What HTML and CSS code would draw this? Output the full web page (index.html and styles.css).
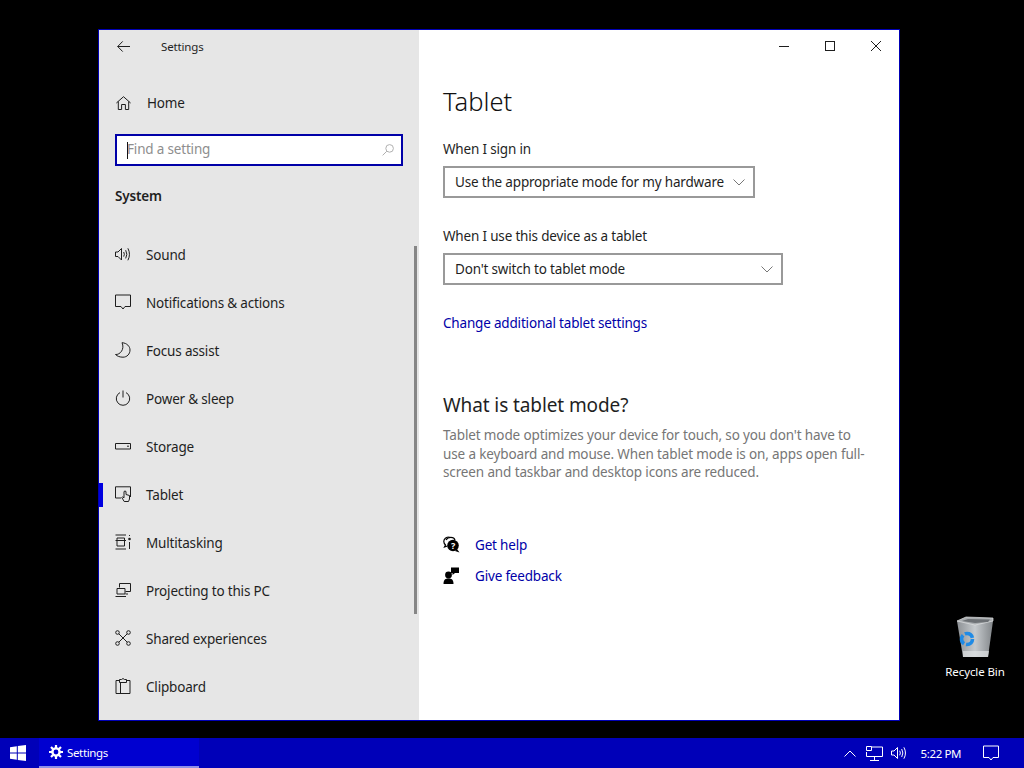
FILE: index.html
```html
<!DOCTYPE html>
<html lang="en">
<head>
<meta charset="utf-8">
<title>Settings</title>
<link rel="stylesheet" href="styles.css">
</head>
<body>
<div class="desktop">
  <div class="recycle">
    <svg class="recycle-icon" width="44" height="46" viewBox="0 0 44 46">
      <defs>
        <linearGradient id="bin" x1="0" x2="1" y1="0" y2="0"><stop offset="0" stop-color="#8d9195"/><stop offset=".5" stop-color="#c6cacd"/><stop offset="1" stop-color="#82868a"/></linearGradient>
      </defs>
      <path d="M4 6 L40 6 L35 42 L10 42 Z" fill="url(#bin)"/>
      <path d="M4 6 L13 2 L40 3 L40 6 L22 10 Z" fill="#a9adb0" stroke="#dfe1e3" stroke-width=".7"/>
      <path d="M9 6 L15 4 L37 4.5 L35 7 L22 8 Z" fill="#6d7175"/>
      <path d="M10 36 L36 36 L35 42 L10 42 Z" fill="#dfe2e4" opacity=".7"/>
      <circle cx="14" cy="24" r="5.5" fill="none" stroke="#1f8be6" stroke-width="3.6" stroke-dasharray="9.5 2"/>
    </svg>
    <span class="recycle-label">Recycle Bin</span>
  </div>

  <section class="window">
    <aside class="sidebar">
      <header class="titlebar">
        <svg class="back" width="13" height="11" viewBox="0 0 13 11"><path d="M5.7 .4 L.7 5.5 L5.7 10.6 M.7 5.5 H13" class="ln"/></svg>
        <span class="app-title">Settings</span>
      </header>
      <a class="home">
        <svg class="home-ic" width="15" height="14" viewBox="0 0 15 14"><path d="M.4 7 L7.5 .7 L14.6 7 M2.3 5.5 V13.5 H5.6 V8.5 H9.4 V13.5 H12.7 V5.5" class="ln"/></svg>
        <span>Home</span>
      </a>
      <div class="search">
        <span class="caret"></span>
        <span class="placeholder">Find a setting</span>
        <svg width="12" height="12" viewBox="0 0 12 12"><circle cx="7.6" cy="4.4" r="3.8" fill="none" stroke="#b0b0b0"/><path d="M4.8 7.2 L.6 11.4" stroke="#b0b0b0" fill="none"/></svg>
      </div>
      <h2 class="group">System</h2>
      <nav class="nav">
        <a class="item"><svg class="ic" width="16" height="16" viewBox="0 0 16 16"><path d="M.5 6 H3 L6.5 2.5 V14 L3 10.5 H.5 Z M8.7 6 Q10 8.3 8.7 10.6 M10.7 4.2 Q13 8.3 10.7 12.4 M12.9 2.3 Q16 8.3 12.9 14.3" class="ln"/></svg><span>Sound</span></a>
        <a class="item"><svg class="ic" width="16" height="16" viewBox="0 0 16 16"><path d="M.5 1 H15.5 V12.5 H10 L8 15 L6 12.5 H.5 Z" class="ln"/></svg><span>Notifications &amp; actions</span></a>
        <a class="item"><svg class="ic" width="16" height="16" viewBox="0 0 16 16"><path d="M7 .7 C12 1 15 4.5 15 8 C15 12 12 15.2 8 15.2 C5 15.2 2 14.2 .5 12.5 C5 13 10 7 7 .7 Z" class="ln"/></svg><span>Focus assist</span></a>
        <a class="item"><svg class="ic" width="16" height="16" viewBox="0 0 16 16"><path d="M5 2.6 A6.7 6.7 0 1 0 11 2.6 M8 .5 V7.5" class="ln"/></svg><span>Power &amp; sleep</span></a>
        <a class="item"><svg class="ic" width="16" height="16" viewBox="0 0 16 16"><path d="M.5 5.5 H15.5 V11 H.5 Z" class="ln"/><path d="M12 8.2 H14" class="ln"/></svg><span>Storage</span></a>
        <a class="item active"><span class="marker"></span><svg class="ic" width="16" height="16" viewBox="0 0 16 16"><path d="M6 12 H.5 V.8 H15.5 V11" class="ln"/><path d="M9.2 15.5 L6.8 11.5 L7.5 10.8 L9 11.8 V5.5 Q10 4.5 11 5.5 V8.5 L14.5 9.5 V13 L13.5 15.5 Z" class="ln fill-bg"/></svg><span>Tablet</span></a>
        <a class="item"><svg class="ic" width="16" height="16" viewBox="0 0 16 16"><path d="M.5 1 H11 M.5 15 H11 M2 4 H9.5 V12 H2 Z M.5 6.5 H11 M14.5 8 V15 M14.5 1 V2" class="ln"/><circle cx="14.5" cy="5" r="1.3" fill="#1e1e1e"/></svg><span>Multitasking</span></a>
        <a class="item"><svg class="ic" width="16" height="16" viewBox="0 0 16 16"><path d="M4.5 5.5 V1.5 H15.5 V9.5 H10.5 M13 12 H10.5" class="ln"/><path d="M2 6.5 H10 V12 H2 Z M.5 14.5 H11" class="ln"/></svg><span>Projecting to this PC</span></a>
        <a class="item"><svg class="ic" width="16" height="16" viewBox="0 0 16 16"><circle cx="2.5" cy="2.5" r="1.8" class="ln"/><circle cx="13.5" cy="2.5" r="1.8" class="ln"/><circle cx="2.5" cy="13.5" r="1.8" class="ln"/><circle cx="13.5" cy="13.5" r="1.8" class="ln"/><path d="M3.8 3.8 L12.2 12.2 M12.2 3.8 L3.8 12.2" class="ln"/></svg><span>Shared experiences</span></a>
        <a class="item"><svg class="ic" width="16" height="16" viewBox="0 0 16 16"><path d="M4 2.5 H1 V15.5 H15 V2.5 H12 M4.5 4.5 V1.5 H6.5 Q8 -.5 9.5 1.5 H11.5 V4.5 Z M5.5 4.5 V15.5" class="ln"/></svg><span>Clipboard</span></a>
      </nav>
      <span class="scrollthumb"></span>
    </aside>

    <main class="content">
      <div class="controls">
        <svg width="10" height="10" viewBox="0 0 10 10"><path d="M0 5.5 H10" class="ln"/></svg>
        <svg width="10" height="10" viewBox="0 0 10 10"><rect x=".5" y=".5" width="9" height="9" class="ln"/></svg>
        <svg width="10" height="10" viewBox="0 0 10 10"><path d="M0 0 L10 10 M10 0 L0 10" class="ln"/></svg>
      </div>
      <div class="pane">
        <h1 class="page-title">Tablet</h1>
        <label class="field-label">When I sign in</label>
        <div class="select select-a"><span>Use the appropriate mode for my hardware</span><svg width="12" height="7" viewBox="0 0 12 7"><path d="M.5 .5 L6 6 L11.5 .5" fill="none" stroke="#777"/></svg></div>
        <label class="field-label second">When I use this device as a tablet</label>
        <div class="select select-b"><span>Don't switch to tablet mode</span><svg width="12" height="7" viewBox="0 0 12 7"><path d="M.5 .5 L6 6 L11.5 .5" fill="none" stroke="#777"/></svg></div>
        <a class="link change">Change additional tablet settings</a>
        <h2 class="sub-title">What is tablet mode?</h2>
        <p class="desc">Tablet mode optimizes your device for touch, so you don't have to<br>use a keyboard and mouse. When tablet mode is on, apps open full-<br>screen and taskbar and desktop icons are reduced.</p>
        <div class="help">
          <a class="help-row"><svg width="17" height="17" viewBox="0 0 17 17"><path d="M6.5 1 C3 1 .8 3 .8 5.5 C.8 7 1.5 8 2.5 9 L1.5 11 L4.5 10" fill="none" stroke="#000" stroke-width="1.2"/><path d="M3 4 C5 .5 11 .5 12 4" fill="none" stroke="#000" stroke-width="1.2"/><circle cx="10" cy="9.5" r="5.8" fill="#000"/><path d="M14 13 L16.5 16.5 L12 15 Z" fill="#000"/><text x="10" y="12.5" class="q">?</text></svg><span class="link">Get help</span></a>
          <a class="help-row"><svg width="17" height="17" viewBox="0 0 17 17"><circle cx="5.5" cy="8" r="3.4" fill="#000"/><path d="M.5 17 C.5 12.5 2.5 11.5 5.5 11.5 C8.5 11.5 10.5 12.5 10.5 17 Z" fill="#000"/><path d="M8 .5 H16 V6 H12 L9.5 8 V6 H8 Z" fill="#000"/></svg><span class="link">Give feedback</span></a>
        </div>
      </div>
    </main>
  </section>

  <footer class="taskbar">
    <div class="start"><svg width="16" height="16" viewBox="0 0 16 16"><path d="M0 2.2 L6.8 1.2 V7.5 H0 Z M7.8 1.1 L16 0 V7.5 H7.8 Z M0 8.5 H6.8 V14.8 L0 13.8 Z M7.8 8.5 H16 V16 L7.8 14.9 Z" fill="#fff"/></svg></div>
    <div class="task"><svg width="14" height="14" viewBox="0 0 14 14"><circle cx="7" cy="7" r="3.6" fill="none" stroke="#fff" stroke-width="2.4"/><path d="M7 0 V3 M7 11 V14 M0 7 H3 M11 7 H14 M2 2 L4 4 M10 10 L12 12 M12 2 L10 4 M4 10 L2 12" stroke="#fff" stroke-width="2.2"/></svg><span>Settings</span></div>
    <div class="tray">
      <svg class="t-chev" width="12" height="7" viewBox="0 0 12 7"><path d="M.5 6.5 L6 1 L11.5 6.5" fill="none" stroke="#fff"/></svg>
      <svg class="t-net" width="17" height="15" viewBox="0 0 17 15"><path d="M4.5 1 H16.5 V10.5 H.5 V6 M8.5 10.5 V14 M4 14.5 H13" fill="none" stroke="#fff"/><path d="M.5 .5 H5.5 V4.5 H.5 Z" fill="#0000bc" stroke="#fff"/></svg>
      <svg class="t-vol" width="16" height="15" viewBox="0 0 16 15"><path d="M.5 5 H3 L6.5 1.5 V12.5 L3 9 H.5 Z M8.7 4.7 Q10 7 8.7 9.3 M10.7 3 Q13 7 10.7 11 M12.9 1.3 Q16 7 12.9 12.7" fill="none" stroke="#fff"/></svg>
      <span class="clock">5:22 PM</span>
      <svg class="t-note" width="16" height="16" viewBox="0 0 16 16"><path d="M.5 1 H15.5 V12.5 H10 L8 15 L6 12.5 H.5 Z" fill="none" stroke="#fff"/></svg>
    </div>
  </footer>
</div>
</body>
</html>
```
FILE: styles.css
```css
* { box-sizing: border-box; }
html, body { margin: 0; padding: 0; }
body { font-family: "Noto Sans", "Open Sans", sans-serif; font-size: 13.5px; letter-spacing: -.18px; color: #1f1f1f; }
.desktop { position: relative; width: 1024px; height: 768px; background: #000; overflow: hidden; }
.ln { fill: none; stroke: #1e1e1e; stroke-width: 1; }
.fill-bg { fill: #e6e6e6; }

.window { position: absolute; left: 98px; top: 29px; width: 802px; height: 692px; border: 1px solid #0000b4; display: flex; background: #fff; }

.sidebar { position: relative; width: 320px; height: 100%; background: #e6e6e6; flex: none; padding-left: 16px; display: flex; flex-direction: column; overflow: hidden; }
.titlebar { height: 32px; display: flex; align-items: center; flex: none; }
.back { margin-left: 2px; }
.app-title { margin-left: 31px; font-size: 11.5px; letter-spacing: -.15px; }
.home { height: 48px; margin-top: 17px; display: flex; align-items: center; flex: none; }
.home-ic { margin-left: 1px; flex: none; }
.home span { margin-left: 16px; }
.ic { flex: none; margin-bottom: 2px; }
.search { width: 288px; height: 32px; margin-top: 7px; border: 2px solid #0000a8; background: #fff; display: flex; align-items: center; padding: 0 7px 0 10px; flex: none; }
.caret { width: 1px; height: 17px; background: #111; margin-right: -1px; flex: none; }
.placeholder { flex: 1; color: #8e8e8e; padding-bottom: 3px; }
.group { margin: 19px 0 0; height: 22px; line-height: 22px; font-size: 13.5px; font-weight: 600; flex: none; }
.nav { display: flex; flex-direction: column; margin-top: 24px; }
.item { position: relative; height: 48px; display: flex; align-items: center; flex: none; }
.item > span:last-child { margin-left: 15px; }
.marker { position: absolute; left: -16px; top: 12px; width: 4px; height: 24px; background: #0000e0; }
.scrollthumb { position: absolute; left: 315px; top: 216px; width: 3px; height: 368px; background: #868686; }

.content { position: relative; flex: 1; min-width: 0; }
.controls { position: absolute; right: 18px; top: 11px; display: flex; gap: 36px; }
.pane { padding: 52px 0 0 24px; }
.page-title { margin: 0; font-size: 25.5px; line-height: 38px; font-weight: 300; letter-spacing: 0; color: #111; }
.field-label { display: block; margin-top: 19px; height: 20px; line-height: 20px; }
.field-label.second { margin-top: 28px; }
.select { height: 32px; margin-top: 7px; border: 2px solid #999; display: flex; align-items: center; justify-content: space-between; padding: 0 8px 0 10px; background: #fff; white-space: nowrap; }
.select-a { width: 312px; }
.select-b { width: 340px; }
.link { color: #0000a8; }
.change { display: block; margin-top: 28px; height: 20px; line-height: 20px; }
.sub-title { margin: 58px 0 0; font-size: 19px; line-height: 28px; font-weight: 400; letter-spacing: -.1px; }
.desc { margin: 7px 0 0; color: #767676; line-height: 18.5px; letter-spacing: -.13px; }
.help { margin-top: 53px; display: flex; flex-direction: column; gap: 11px; }
.help-row { display: flex; align-items: center; height: 20px; }
.help-row .link { margin-left: 15px; }
.q { font-family: "Noto Sans", sans-serif; font-size: 9px; font-weight: 700; fill: #fff; text-anchor: middle; }

.recycle { position: absolute; left: 940px; top: 615px; width: 70px; display: flex; flex-direction: column; align-items: center; color: #fff; }
.recycle-label { font-size: 11.5px; line-height: 16px; margin-top: 3px; white-space: nowrap; letter-spacing: -.1px; }

.taskbar { position: absolute; left: 0; right: 0; bottom: 0; height: 30px; background: #0000b8; display: flex; align-items: center; color: #fff; }
.start { width: 39px; height: 30px; display: flex; align-items: center; padding-left: 10px; }
.task { width: 160px; height: 30px; background: #0000d0; border-bottom: 2px solid #8f8fe8; display: flex; align-items: center; padding-left: 10px; font-size: 11.5px; letter-spacing: -.35px; }
.task span { margin-left: 4px; }
.tray { margin-left: auto; display: flex; align-items: center; padding-right: 25px; }
.t-net { margin-left: 10px; }
.t-vol { margin-left: 8px; }
.clock { font-size: 11.5px; margin-left: 14px; letter-spacing: -.4px; }
.t-note { margin-left: 22px; }
```
